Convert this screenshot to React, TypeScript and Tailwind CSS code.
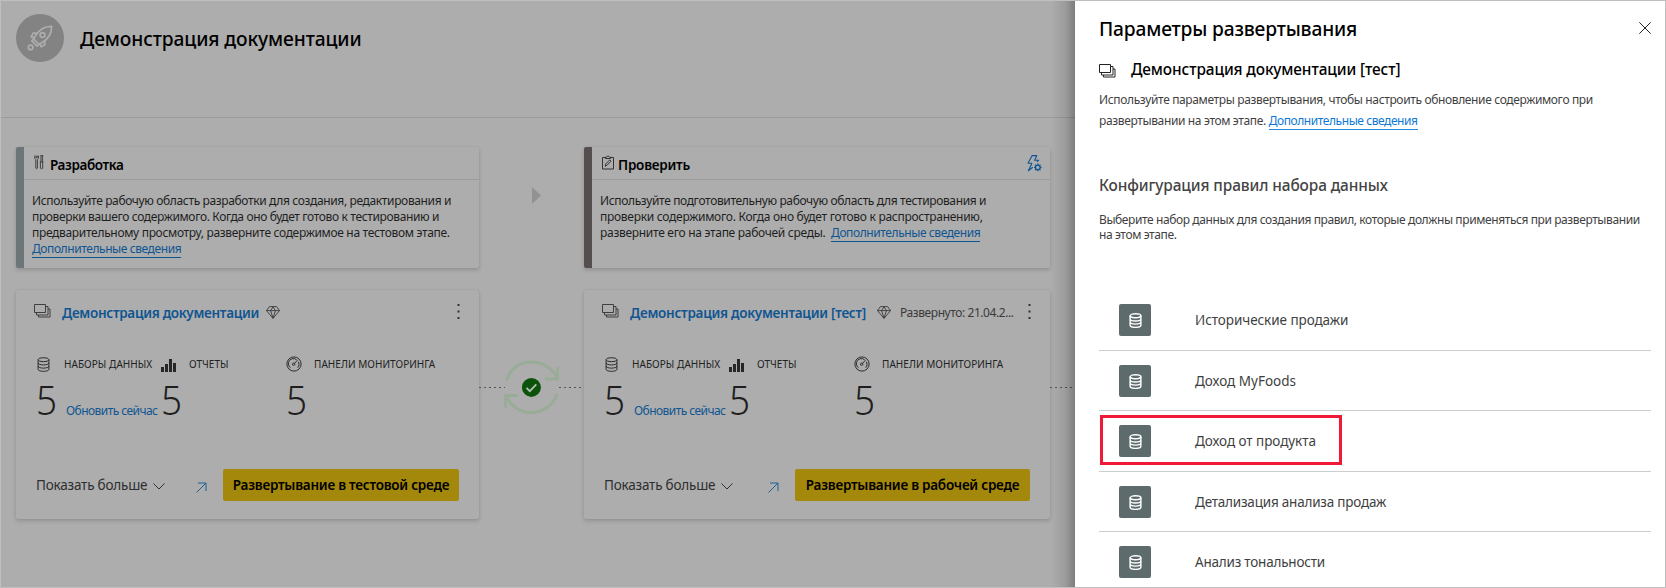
import type { ReactNode } from "react";

function RocketIcon() {
  return (
    <svg width="26" height="26" viewBox="0 0 26 26" fill="none" stroke="#adadad" strokeWidth="1.700" strokeLinejoin="round">
      <path d="M24.6 1.4C17.5 1.2 12.5 4.2 8.2 11.2L6.6 14l5.4 5.4 2.8-1.6C21.8 13.5 24.8 8.500 24.600 1.400Z" />
      <circle cx="15.500" cy="10" r="2.400" />
      <path d="M10.500 8.200H6.200L4.200 12l3.200.9M17.800 15.500v4.200L14 21.800l-1-3.200M7.500 13.500 4.800 15.800l5.200 5.400 2.200-2.500" />
      <circle cx="3.600" cy="22.400" r="2.300" />
    </svg>
  );
}

function StackIcon({ color, className = "" }: { color: string; className?: string }) {
  return (
    <svg className={className} width="17" height="14" viewBox="0 0 17 14" fill="none" stroke={color} strokeWidth="1">
      <path d="M.5.5h11v8H.5zM11.500 2.500h2.500v8.500h-11.500v-2.500M14 5h2v8H4.500v-2" />
    </svg>
  );
}

function ToolsIcon() {
  return (
    <svg width="10" height="15" viewBox="0 0 10 15" fill="none" stroke="#333" strokeWidth="0.9">
      <path d="M.8.6v2.800l1 1.200v8.600q.8 1.200 1.600 0V4.600l1-1.200V.6M2 .6v2h1.200v-2M6.500.6h2.400l-.5 3v3.200M7 .6v6.200M5.800 6.900h3.600M6.400 6.900v6.300q1.200 1.200 2.300 0V6.900" />
    </svg>
  );
}

function ClipboardIcon() {
  return (
    <svg width="12" height="15" viewBox="0 0 12 15" fill="none" stroke="#333" strokeWidth="1">
      <path d="M3.500 2.500h-3v11.500h11V2.500h-3M3.500 3.500v-1.500h1.200q1.300-2.500 2.600 0h1.200v1.500zM3.200 11.200l.6-2.400 3.700-3.700q1.200-.3 1.400 1.200l-3.800 3.900z" />
    </svg>
  );
}

function BoltGearIcon() {
  return (
    <svg width="15" height="17" viewBox="0 0 15 17" fill="none" stroke="#0f5591" strokeWidth="1.100">
      <path d="M5 8.200H1L5.200.6h4.600L7.600 5.200h4L10 6.800M5 8.200 1.300 15.800 5.800 12.200" strokeLinejoin="round" />
      <circle cx="10.800" cy="12.400" r="2.300" strokeWidth="1.300" />
      <path d="M10.800 8.600v1.400M10.800 14.800v1.400M7 12.400h1.400M13.200 12.400h1.400M8.100 9.700l1 1M12.500 14.100l1 1M8.100 15.100l1-1M12.500 10.700l1-1" strokeWidth="1.200" />
    </svg>
  );
}

function DiamondIcon() {
  return (
    <svg width="14" height="13" viewBox="0 0 14 13" fill="none" stroke="#3a3a3a" strokeWidth="0.900" strokeLinejoin="round">
      <path d="M3.400.6h7.200l2.900 4L7 12.400.5 4.600zM.5 4.600h13M4.600 4.600 7 .8l2.400 3.800L7 12.200z" />
    </svg>
  );
}

function DatabaseIcon({ color, width = 1 }: { color: string; width?: number }) {
  return (
    <svg width="13" height="15" viewBox="0 0 13 15" fill="none" stroke={color} strokeWidth={width}>
      <ellipse cx="6.500" cy="2.700" rx="5.400" ry="2" />
      <path d="M1.100 2.700v9.600c0 2.700 10.800 2.700 10.800 0V2.700M1.100 5.900c0 2.700 10.800 2.700 10.800 0M1.100 9.100c0 2.700 10.800 2.700 10.800 0" />
    </svg>
  );
}

function BarsIcon() {
  return (
    <svg width="15" height="14" viewBox="0 0 15 14" fill="#262626">
      <path d="M0 9h3v5H0zM4 6h3v8H4zM8 1h3v13H8zM12 5h3v9h-3z" />
    </svg>
  );
}

function GaugeIcon() {
  return (
    <svg width="16" height="16" viewBox="0 0 16 16" fill="none" stroke="#2b2b2b" strokeWidth="1">
      <circle cx="8" cy="8" r="7.100" />
      <path d="M4.300 11.600A5 5 0 0 1 10.600 3.700M12.500 5.800a5 5 0 0 1-.8 5.800M8.600 7.200 11.500 4.200" />
      <circle cx="7.700" cy="8.200" r="1.200" />
    </svg>
  );
}

function CycleIcon() {
  return (
    <svg width="56" height="55" viewBox="0 0 56 55" fill="none" stroke="#98ac98" strokeWidth="3">
      <path d="M2.500 20.500C6 9 15 2 27 2s22 6.500 26 16M53.500 7v12H41M1.500 47.500v-12H14M2 36c4.500 10 14 16.500 25 16.500S49 46 53 34" />
      <circle cx="27.400" cy="27.400" r="9.500" fill="#0b520b" stroke="none" />
      <path d="m22.500 27.800 3.300 3.300 6.500-6.800" stroke="#b4c0b4" strokeWidth="1.800" />
    </svg>
  );
}

const Dashes = ({ className }: { className: string }) => (
  <div className={`h-px bg-[repeating-linear-gradient(90deg,#555_0_2px,transparent_2px_5px)] ${className}`} />
);

const shadow = "shadow-[0_2px_4px_rgba(0,0,0,0.16),0_0_2px_rgba(0,0,0,0.06)]";

function StageCard({ bar, icon, title, titleClass, action, children }: { bar: string; icon: ReactNode; title: string; titleClass: string; action?: ReactNode; children: ReactNode }) {
  return (
    <section className={`flex h-[121px] overflow-hidden rounded-[2px] ${shadow}`}>
      <div className={`w-2 shrink-0 ${bar}`} />
      <div className="min-w-0 flex-1">
        <header className="flex h-[33px] items-start border-b border-[#9b9b9b] pr-2">
          <div className="ml-[10px] mt-[8px] w-[16px]">{icon}</div>
          <h2 className={`mt-[8px] flex-1 text-[13.5px] font-semibold leading-5 text-black ${titleClass}`}>{title}</h2>
          <div className="mt-[8px]">{action}</div>
        </header>
        <p className="whitespace-nowrap pl-[8px] pt-[13px] text-[12px] leading-4 tracking-[-0.36px] text-[#1f1f1f]">{children}</p>
      </div>
    </section>
  );
}

function Stat({ icon, label, action }: { icon: ReactNode; label: string; action?: string }) {
  return (
    <div className="w-[125px] shrink-0 whitespace-nowrap">
      <div className="flex h-4 items-center">
        <div className="w-[28px] shrink-0">{icon}</div>
        <span className="text-[10px] leading-4 tracking-[0.05px] text-[#222]">{label}</span>
      </div>
      <div className="mt-[3px] flex items-baseline">
        <span className="w-[30px] shrink-0 origin-left scale-x-[0.9] text-[41px] leading-[48px] text-[#1e1e1e] [font-weight:350]">5</span>
        {action && <span className="text-[12px] leading-4 tracking-[-0.56px] text-[#0f5591]">{action}</span>}
      </div>
    </div>
  );
}

function WorkspaceCard({ title, titleClass, deployed, button, buttonClass }: { title: string; titleClass: string; deployed?: string; button: string; buttonClass: string }) {
  return (
    <section className={`flex h-[229px] flex-col rounded-[3px] ${shadow}`}>
      <div className="flex h-[33px] items-start pl-[18px] pr-[19px] pt-[13px]">
        <StackIcon color="#3f3f3f" className="mt-[1px]" />
        <span className={`ml-[11px] whitespace-nowrap text-[13.5px] font-semibold leading-5 text-[#0f5591] ${titleClass}`}>{title}</span>
        <div className={deployed ? "ml-[11px] mt-[3px]" : "ml-[7px] mt-[3px]"}><DiamondIcon /></div>
        {deployed && <span className="ml-[9px] whitespace-nowrap text-[12px] leading-5 tracking-[-0.43px] text-[#3a3a3a]">{deployed}</span>}
        <svg className="ml-auto" width="3" height="17" viewBox="0 0 3 17" fill="#333"><path d="M.5 1h2v2h-2zM.5 7.500h2v2h-2zM.5 14h2v2h-2z" /></svg>
      </div>
      <div className="mt-[33px] flex pl-5">
        <Stat icon={<div className="pl-[1px]"><DatabaseIcon color="#2b2b2b" /></div>} label="НАБОРЫ ДАННЫХ" action="Обновить сейчас" />
        <Stat icon={<div className="pt-[1px]"><BarsIcon /></div>} label="ОТЧЕТЫ" />
        <Stat icon={<GaugeIcon />} label="ПАНЕЛИ МОНИТОРИНГА" />
      </div>
      <div className="mb-[18px] mt-auto flex items-center pl-5 pr-5">
        <span className="whitespace-nowrap text-[13.5px] leading-5 tracking-[-0.2px] text-[#2e2e2e]">Показать больше</span>
        <svg className="ml-[6px] mt-[2px]" width="12" height="7" viewBox="0 0 12 7" fill="none" stroke="#333"><path d="m.5.5 5.500 5.500L11.500.5" /></svg>
        <svg className="ml-auto mt-[4px]" width="11" height="11" viewBox="0 0 11 11" fill="none" stroke="#1f5f97"><path d="M.5 10.500 10 1M2 1h8v8" /></svg>
        <button className={`ml-[16px] h-8 whitespace-nowrap rounded-[2px] bg-[#a4880b] text-center text-[13.5px] font-semibold leading-[31px] tracking-[-0.24px] text-black ${buttonClass}`}>{button}</button>
      </div>
    </section>
  );
}

const datasets = [
  { name: "Исторические продажи", row: "h-[61px]", text: "tracking-[-0.06px]" },
  { name: "Доход MyFoods", row: "h-[60px]", text: "tracking-[0px]" },
  { name: "Доход от продукта", row: "h-[61px]", text: "tracking-[-0.05px]", selected: true },
  { name: "Детализация анализа продаж", row: "h-[60px]", text: "tracking-[-0.21px]" },
  { name: "Анализ тональности", row: "h-[56px]", text: "tracking-[-0.21px]" },
];

function DeploymentPanel() {
  return (
    <aside className="relative flex w-[590px] shrink-0 flex-col bg-white pl-6 pr-[14px]">
      <div className="absolute inset-y-0 -left-6 w-6 bg-[linear-gradient(to_left,rgba(0,0,0,0.28),rgba(0,0,0,0.10)_40%,transparent)]" />
      <div className="flex items-start pt-[13px]">
        <h1 className="mt-[1px] whitespace-nowrap text-[19.2px] font-medium leading-[27px] tracking-[-0.16px] text-black">Параметры развертывания</h1>
        <svg className="ml-auto mt-[8px]" width="12" height="12" viewBox="0 0 12 12" stroke="#222" strokeWidth="1"><path d="m.3.3 11.400 11.400M11.700.3.3 11.700" /></svg>
      </div>
      <div className="mt-[15px] flex items-start">
        <StackIcon color="#222" className="mt-[7px]" />
        <h2 className="ml-[15px] whitespace-nowrap text-[15.4px] font-medium leading-[26px] tracking-[-0.11px] text-black">Демонстрация документации [тест]</h2>
      </div>
      <p className="mt-[6px] whitespace-nowrap text-[12px] leading-[21px] tracking-[-0.36px] text-[#3f3f3f]">
        Используйте параметры развертывания, чтобы настроить обновление содержимого при
        <br />
        развертывании на этом этапе. <a className="border-b border-[#2b88d8] tracking-[-0.43px] text-[#0f78d4]">Дополнительные сведения</a>
      </p>
      <h3 className="mt-[42px] whitespace-nowrap text-[15.4px] font-medium leading-[26px] tracking-[-0.1px] text-[#444]">Конфигурация правил набора данных</h3>
      <p className="mt-[13px] whitespace-nowrap text-[12px] leading-[15px] tracking-[-0.4px] text-[#3f3f3f]">
        Выберите набор данных для создания правил, которые должны применяться при развертывании
        <br />
        на этом этапе.
      </p>
      <ul className="mt-[48px]">
        {datasets.map((d) => (
          <li key={d.name} className={`relative flex items-start border-b border-[#cdcdcd] pl-5 pt-[14px] last:border-b-0 ${d.row}`}>
            <div className="flex size-8 shrink-0 items-center justify-center rounded-[2px] bg-[#5e6b6d]">
              <DatabaseIcon color="#fff" width={1.4} />
            </div>
            <span className={`ml-[44px] whitespace-nowrap text-[13.5px] leading-8 text-[#3f3f3f] ${d.text}`}>{d.name}</span>
            {d.selected && <div className="absolute left-[1px] top-[4px] h-[50px] w-[242px] border-[3px] border-[#f01a36]" />}
          </li>
        ))}
      </ul>
    </aside>
  );
}

export default function App() {
  const link = "border-b border-[#0f5591] tracking-[-0.42px] text-[#0f5591]";
  return (
    <div className="flex h-[588px] w-[1666px] overflow-hidden border border-[#bfbfbf] bg-[#adadad] font-['Noto_Sans',sans-serif]">
      <main className="w-[1074px] shrink-0">
        <header className="flex h-[117px] items-start border-b border-[#9b9b9b] pl-[15px] pt-[13px]">
          <div className="flex size-12 items-center justify-center rounded-full bg-[#838383]"><RocketIcon /></div>
          <h1 className="ml-4 mt-[11px] text-[19.2px] font-medium leading-7 tracking-[-0.1px] text-black">Демонстрация документации</h1>
        </header>
        <div className="grid grid-cols-[463px_105px_466px_24px] gap-y-[22px] pl-[15px] pt-[29px]">
          <StageCard bar="bg-[#6c7678]" icon={<ToolsIcon />} title="Разработка" titleClass="tracking-[-0.39px]">
            Используйте рабочую область разработки для создания, редактирования и<br />
            проверки вашего содержимого. Когда оно будет готово к тестированию и<br />
            <span className="tracking-[-0.32px]">предварительному просмотру, разверните содержимое на тестовом этапе.</span><br />
            <a className={link}>Дополнительные сведения</a>
          </StageCard>
          <div className="pl-[53px] pt-[40px]">
            <svg width="9" height="17" viewBox="0 0 9 17" fill="#929292"><path d="M0 0 9 8.500 0 17z" /></svg>
          </div>
          <StageCard bar="bg-[#544f4e]" icon={<ClipboardIcon />} title="Проверить" titleClass="tracking-[-0.23px]" action={<BoltGearIcon />}>
            Используйте подготовительную рабочую область для тестирования и<br />
            <span className="tracking-[-0.28px]">проверки содержимого. Когда оно будет готово к распространению,</span><br />
            <span className="tracking-[-0.29px]">разверните его на этапе рабочей среды.&nbsp; </span><a className={link}>Дополнительные сведения</a>
          </StageCard>
          <div />
          <WorkspaceCard title="Демонстрация документации" titleClass="tracking-[-0.30px]" button="Развертывание в тестовой среде" buttonClass="w-[236px]" />
          <div className="mt-[70px] flex h-[55px] items-center self-start">
            <Dashes className="w-[26px]" />
            <div className="-mx-px shrink-0"><CycleIcon /></div>
            <Dashes className="w-[23px]" />
          </div>
          <WorkspaceCard title="Демонстрация документации [тест]" titleClass="tracking-[-0.27px]" deployed="Развернуто: 21.04.2..." button="Развертывание в рабочей среде" buttonClass="w-[235px]" />
          <Dashes className="mt-[97px] w-[24px]" />
        </div>
      </main>
      <DeploymentPanel />
    </div>
  );
}
